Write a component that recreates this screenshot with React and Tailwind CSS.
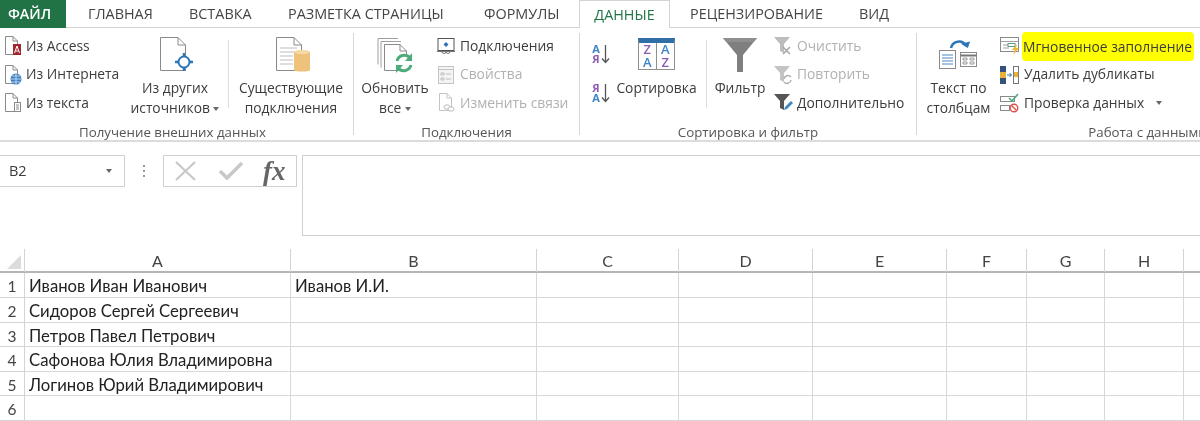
const tabs = [
  { label: "ГЛАВНАЯ", className: "w-[101px]" },
  { label: "ВСТАВКА", className: "w-[99px]" },
  { label: "РАЗМЕТКА СТРАНИЦЫ", className: "w-[196px]" },
  { label: "ФОРМУЛЫ", className: "w-[110px]" },
];

const columns = ["A", "B", "C", "D", "E", "F", "G", "H"];

const rows = [
  ["Иванов Иван Иванович", "Иванов И.И."],
  ["Сидоров Сергей Сергеевич", ""],
  ["Петров Павел Петрович", ""],
  ["Сафонова Юлия Владимировна", ""],
  ["Логинов Юрий Владимирович", ""],
  ["", ""],
];

const gridCols =
  "grid grid-cols-[25px_266px_246px_142px_134px_134px_80px_78px_79px_80px] w-[1264px]";

const Page = ({ x = 0, y = 0, w = 13, h = 18, fold = 5, color = "#8a8a8a" }) => (
  <path
    d={`M${x + 0.5} ${y + 0.5}H${x + w - fold}L${x + w - 0.5} ${y + fold}V${y + h - 0.5}H${x + 0.5}ZM${x + w - fold} ${y + 0.5}V${y + fold}H${x + w - 0.5}`}
    fill="#fff"
    stroke={color}
  />
);

const AccessIcon = () => (
  <svg width="20" height="20" viewBox="-2 0 20 20">
    <Page x={1} y={0} w={13} h={19} />
    <rect x="9" y="8" width="8" height="11" fill="#a4262c" />
    <path d="M10.500 17l2.500-7 2.500 7M11.500 15h3" stroke="#fff" fill="none" />
  </svg>
);

const WebIcon = () => (
  <svg width="20" height="20" viewBox="-2 0 20 20">
    <Page x={1} y={0} w={13} h={19} />
    <circle cx="12" cy="14" r="5.500" fill="#3f7fc4" />
    <path d="M6.500 14h11M12 8.500v11M8 11h8M8 17h8" stroke="#d7e6f5" strokeWidth="0.800" />
  </svg>
);

const TextFileIcon = () => (
  <svg width="20" height="20" viewBox="-2 0 20 20">
    <Page x={1} y={0} w={13} h={19} />
    <rect x="10.500" y="9.500" width="6" height="9" fill="#fff" stroke="#8a8a8a" />
    <path d="M12 12h3M12 14h3M12 16h3" stroke="#8a8a8a" />
  </svg>
);

const OtherSourcesIcon = () => (
  <svg width="36" height="36" viewBox="0 0 36 36" className="ml-[6px]">
    <Page x={0} y={0} w={26} h={34} fold={8} />
    <circle cx="24" cy="25" r="5.500" fill="#fff" stroke="#2e75b6" strokeWidth="2" />
    <path d="M24 16v4M24 30v4M15 25h4M29 25h4" stroke="#2e75b6" strokeWidth="2.500" />
  </svg>
);

const ExistingIcon = () => (
  <svg width="36" height="36" viewBox="0 0 36 36" className="ml-[6px]">
    <Page x={0} y={0} w={26} h={34} fold={8} />
    <path d="M4 11h17M4 15h17M4 19h13M4 23h13M4 27h13" stroke="#bdbdbd" />
    <path d="M18 15c0-2 16-2 16 0v18c0 2-16 2-16 0z" fill="#eec27a" />
    <ellipse cx="26" cy="15" rx="8" ry="2" fill="#f5d9a6" />
  </svg>
);

const RefreshIcon = () => (
  <svg width="38" height="36" viewBox="0 0 38 36" className="ml-[2px]">
    <path d="M1 1.500h20M1 1.500v26M4 4.500h20M4 4.500v26" fill="none" stroke="#a0a0a0" />
    <Page x={7} y={7} w={23} h={27} fold={7} />
    <circle cx="27" cy="26" r="9" fill="#fff" />
    <path
      d="M20 24a7.500 7.500 0 0 1 13-3M34 28a7.500 7.500 0 0 1-13 3"
      fill="none"
      stroke="#4eab7b"
      strokeWidth="3"
    />
    <path d="M35 16v8h-7zM19 36v-8h7z" fill="#4eab7b" />
  </svg>
);

const ConnectionsIcon = () => (
  <svg width="20" height="20" viewBox="0 0 20 20">
    <rect x="2" y="2.500" width="16" height="12" fill="#fff" stroke="#555" />
    <path d="M10 6l2.500 2.500L10 11 7.500 8.500z" fill="#2e75b6" />
    <path d="M1 15.500h18M6 15.500a2 2 0 0 0 4 0M10 15.500a2 2 0 0 0 4 0" fill="none" stroke="#777" />
  </svg>
);

const PropertiesIcon = () => (
  <svg width="20" height="20" viewBox="0 0 20 20">
    <rect x="2.500" y="1.500" width="15" height="17" fill="#f4f4f4" stroke="#c4c4c4" />
    <path d="M2.500 4.500h15" stroke="#c4c4c4" />
    <path d="M5 8h3v2H5zM5 13h3v2H5zM10 9h5M10 14h5" stroke="#bdbdbd" fill="none" />
  </svg>
);

const ChangeLinksIcon = () => (
  <svg width="20" height="20" viewBox="0 0 20 20">
    <Page x={3} y={0} w={13} h={18} color="#c4c4c4" />
    <rect x="8" y="12" width="6" height="4" rx="2" fill="#fff" stroke="#bdbdbd" />
    <rect x="12" y="14" width="6" height="4" rx="2" fill="#fff" stroke="#bdbdbd" />
  </svg>
);

const SortIcon = ({ top, bottom, topClass, bottomClass }) => (
  <div className="flex items-center h-5">
    <div className="flex flex-col items-center w-[8px] text-[11px] font-bold leading-[10px]">
      <span className={topClass}>{top}</span>
      <span className={bottomClass}>{bottom}</span>
    </div>
    <svg width="9" height="20" viewBox="0 0 9 20" className="ml-[1px]">
      <path d="M4.500 1v17M1 14.500l3.500 4 3.500-4" fill="none" stroke="#555" strokeWidth="1.300" />
    </svg>
  </div>
);

const SortBigIcon = () => (
  <div className="grid grid-cols-2 w-[37px] h-[32px] -mt-[2px] border border-[#8f8f8f] border-t-[5px] border-t-[#2f6ea6] text-[13px] font-semibold leading-[13px] text-center">
    <span className="border-r border-[#8f8f8f] text-[#8a5db3]">Z</span>
    <span className="text-[#3d85c6]">A</span>
    <span className="border-r border-[#8f8f8f] text-[#3d85c6]">A</span>
    <span className="text-[#8a5db3]">Z</span>
  </div>
);

const FilterBigIcon = () => (
  <svg width="36" height="36" viewBox="0 0 36 36">
    <path d="M1 1h34L21 18v17h-6V18z" fill="#7f7f7f" />
    <path d="M1 1h34l-3 4H4z" fill="#8f8f8f" />
  </svg>
);

const FilterSmall = ({ color, children }) => (
  <svg width="20" height="20" viewBox="0 0 20 20">
    <path d="M1 1h16l-6 7v9l-4-2V8z" fill={color} />
    {children}
  </svg>
);

const ClearIcon = () => (
  <FilterSmall color="#bdbdbd">
    <path d="M10 11l7 7M17 11l-7 7" stroke="#a8a8a8" strokeWidth="1.600" />
  </FilterSmall>
);

const RepeatIcon = () => (
  <FilterSmall color="#c4c4c4">
    <path d="M11 14a4 4 0 0 1 7-2M18 15a4 4 0 0 1-7 2" fill="none" stroke="#b0b0b0" strokeWidth="1.400" />
  </FilterSmall>
);

const AdvancedIcon = () => (
  <FilterSmall color="#555">
    <path d="M11 17l1-3 6-6 2 2-6 6z" fill="#3d85c6" />
  </FilterSmall>
);

const TextToColumnsIcon = () => (
  <svg width="38" height="32" viewBox="0 0 38 32" className="-mt-[5px] -ml-[2px]">
    <path d="M12 11a8 8 0 0 1 15-2" fill="none" stroke="#2e75b6" strokeWidth="2.500" />
    <path d="M22 8l8 2 0-7z" fill="#2e75b6" transform="rotate(18 26 7)" />
    <rect x="0.500" y="13.500" width="16" height="18" fill="#fff" stroke="#8a8a8a" />
    <path d="M3 18h11M3 21h11M3 24h11M3 27h11" stroke="#4a87c0" />
    <rect x="21.500" y="15.500" width="16" height="14" fill="#fff" stroke="#8a8a8a" />
    <path d="M21.500 18.500h16" stroke="#777" strokeWidth="2" />
    <path d="M24 21h4v2h-4zM31 21h4v2h-4zM24 25h4v2h-4zM31 25h4v2h-4z" fill="none" stroke="#999" />
  </svg>
);

const FlashFillIcon = () => (
  <svg width="20" height="20" viewBox="0 0 20 20">
    <rect x="0.500" y="1.500" width="18" height="14" fill="#fff" stroke="#8a8a8a" />
    <path d="M0.500 5.500h18M3 9h6M3 12h6" stroke="#a0a0a0" />
    <rect x="8" y="7.500" width="7" height="3" fill="#fff" stroke="#5d9c7d" />
    <path d="M17 8l-5 6h3l-2 5 6-7h-3z" fill="#f0b428" />
  </svg>
);

const DuplicatesIcon = () => (
  <svg width="20" height="20" viewBox="0 0 20 20">
    <rect x="0" y="1" width="6" height="6" fill="#35527c" />
    <rect x="0" y="7" width="6" height="6" fill="#e8b13c" />
    <rect x="0" y="13" width="6" height="6" fill="#35527c" />
    <rect x="13.500" y="1.500" width="5" height="17" fill="#fff" stroke="#777" />
    <rect x="14" y="7" width="4" height="5" fill="#e8b13c" />
    <path d="M7 10h4.500M9.500 8l2 2-2 2" fill="none" stroke="#2e75b6" />
  </svg>
);

const ValidationIcon = () => (
  <svg width="20" height="20" viewBox="0 0 20 20">
    <rect x="0.500" y="3.500" width="14" height="5" fill="#fff" stroke="#8a8a8a" />
    <rect x="0.500" y="12.500" width="9" height="5" fill="#fff" stroke="#8a8a8a" />
    <path d="M9 5l3 3 6-7" fill="none" stroke="#4eab7b" strokeWidth="1.600" />
    <circle cx="14" cy="15" r="3.800" fill="#fff" stroke="#d9534f" strokeWidth="1.400" />
    <path d="M11.500 12.500l5 5" stroke="#d9534f" strokeWidth="1.400" />
  </svg>
);

const Caret = ({ className = "" }) => (
  <span
    className={`inline-block w-0 h-0 border-x-[3.5px] border-x-transparent border-t-[4px] border-t-[#666] align-middle ${className}`}
  />
);

const SmallItem = ({ icon, disabled, children }) => (
  <div
    className={`flex items-center h-[28.5px] whitespace-nowrap ${
      disabled ? "text-[#b1b1b1]" : "text-[#3c3c3c]"
    }`}
  >
    <span className="flex w-5 h-5 shrink-0 mr-[4px]">{icon}</span>
    {children}
  </div>
);

const BigButton = ({ icon, children, className = "" }) => (
  <div className={`flex flex-col items-center text-center leading-5 pt-1 ${className}`}>
    <div className="flex items-center justify-center h-[46px]">{icon}</div>
    {children}
  </div>
);

const RibbonGroup = ({ label, width, labelClass = "", children }) => (
  <div className={`flex shrink-0 ${width}`}>
    <div className="flex flex-col flex-1 min-w-0">
      <div className="flex flex-1">{children}</div>
      <div className={`h-[20px] leading-[24px] text-center text-[13.300px] text-[#555] ${labelClass}`}>
        {label}
      </div>
    </div>
    <div className="w-px bg-[#d8d8d8] my-[5px]" />
  </div>
);

const InnerSeparator = ({ className = "" }) => (
  <div className={`w-px h-[68px] mt-3 bg-[#dedede] ${className}`} />
);

const App = () => {
  return (
    <div className="w-[1200px] h-[421px] overflow-hidden bg-white blur-[0.35px] font-['Open_Sans',sans-serif] text-[13.800px] text-[#3c3c3c]">
      {/* tabs */}
      <div className="flex h-[28px] border-b border-[#d4d4d4] text-[14.400px] text-[#444] leading-[27px]">
        <div className="w-[66px] h-[28px] pr-[7px] bg-[#217346] text-white text-center font-semibold">
          ФАЙЛ
        </div>
        <div className="w-[22px]" />
        {tabs.map((tab) => (
          <div key={tab.label} className={`${tab.className} whitespace-nowrap`}>
            {tab.label}
          </div>
        ))}
        <div className="w-[91px] -ml-[15px] h-[28px] bg-white border-x border-t border-[#d4d4d4] text-center text-[#217346]">
          ДАННЫЕ
        </div>
        <div className="w-[20px]" />
        <div className="w-[169px]">РЕЦЕНЗИРОВАНИЕ</div>
        <div>ВИД</div>
      </div>

      {/* ribbon */}
      <div className="flex h-[114px] border-b-2 border-[#dcdcdc]">
        <RibbonGroup label="Получение внешних данных" width="w-[354px]" labelClass="pr-2">
          <div className="pl-[2px] pt-1 w-[125px]">
            <SmallItem icon={<AccessIcon />}>Из Access</SmallItem>
            <SmallItem icon={<WebIcon />}>Из Интернета</SmallItem>
            <SmallItem icon={<TextFileIcon />}>Из текста</SmallItem>
          </div>
          <BigButton icon={<OtherSourcesIcon />} className="w-[100px]">
            <span>Из других</span>
            <span className="whitespace-nowrap">
              источников <Caret />
            </span>
          </BigButton>
          <InnerSeparator className="ml-[3px]" />
          <BigButton icon={<ExistingIcon />} className="flex-1">
            <span>Существующие</span>
            <span>подключения</span>
          </BigButton>
        </RibbonGroup>

        <RibbonGroup label="Подключения" width="w-[226px]">
          <BigButton icon={<RefreshIcon />} className="w-[82px]">
            <span>Обновить</span>
            <span>
              все <Caret />
            </span>
          </BigButton>
          <div className="pt-1">
            <SmallItem icon={<ConnectionsIcon />}>Подключения</SmallItem>
            <SmallItem icon={<PropertiesIcon />} disabled>
              Свойства
            </SmallItem>
            <SmallItem icon={<ChangeLinksIcon />} disabled>
              Изменить связи
            </SmallItem>
          </div>
        </RibbonGroup>

        <RibbonGroup label="Сортировка и фильтр" width="w-[337px]">
          <div className="flex flex-col gap-[19px] pl-[12px] pt-[16px] w-[36px]">
            <SortIcon top="А" bottom="Я" topClass="text-[#3d85c6]" bottomClass="text-[#8a5db3]" />
            <SortIcon top="Я" bottom="А" topClass="text-[#8a5db3]" bottomClass="text-[#3d85c6]" />
          </div>
          <BigButton icon={<SortBigIcon />} className="w-[81px]">
            <span>Сортировка</span>
          </BigButton>
          <InnerSeparator className="ml-[9px]" />
          <BigButton icon={<FilterBigIcon />} className="w-[66px]">
            <span>Фильтр</span>
          </BigButton>
          <div className="pt-1">
            <SmallItem icon={<ClearIcon />} disabled>
              Очистить
            </SmallItem>
            <SmallItem icon={<RepeatIcon />} disabled>
              Повторить
            </SmallItem>
            <SmallItem icon={<AdvancedIcon />}>Дополнительно</SmallItem>
          </div>
        </RibbonGroup>

        <RibbonGroup label="Работа с данными" width="w-[462px]">
          <BigButton icon={<TextToColumnsIcon />} className="w-[83px]">
            <span>Текст по</span>
            <span>столбцам</span>
          </BigButton>
          <div className="pt-1">
            <SmallItem icon={<FlashFillIcon />}>
              <span className="bg-[#ffff00] rounded-[4px] pr-[2px] pl-px pt-[5px] pb-[3px] -ml-[2px]">
                Мгновенное заполнение
              </span>
            </SmallItem>
            <SmallItem icon={<DuplicatesIcon />}>Удалить дубликаты</SmallItem>
            <SmallItem icon={<ValidationIcon />}>
              Проверка данных
              <Caret className="ml-[12px]" />
            </SmallItem>
          </div>
        </RibbonGroup>
      </div>

      {/* formula bar */}
      <div className="flex mt-[13px] h-[81px]">
        <div className="flex items-center justify-between w-[125px] h-[32px] pl-[9px] pr-3 border border-l-0 border-[#d0d0d0] text-[14.500px]">
          B2
          <Caret />
        </div>
        <div className="flex flex-col items-center gap-[3px] w-[38px] pt-[10px]">
          <span className="w-[2px] h-[2px] bg-[#999]" />
          <span className="w-[2px] h-[2px] bg-[#999]" />
          <span className="w-[2px] h-[2px] bg-[#999]" />
        </div>
        <div className="flex items-center w-[134px] h-[32px] border border-[#d0d0d0]">
          <svg width="22" height="20" viewBox="0 0 22 20" className="ml-[11px]">
            <path d="M1 1l19 18M20 1L1 19" stroke="#c8c8c8" strokeWidth="2.200" />
          </svg>
          <svg width="24" height="18" viewBox="0 0 24 18" className="ml-[22px]">
            <path d="M1 9l7 7L23 1" fill="none" stroke="#c8c8c8" strokeWidth="3.500" />
          </svg>
          <span className="ml-[20px] font-['Liberation_Serif',serif] italic font-bold text-[27px] leading-none text-[#666]">
            fx
          </span>
        </div>
        <div className="flex-1 ml-[5px] border-l border-b border-t border-[#d0d0d0]" />
      </div>

      {/* sheet */}
      <div className={`${gridCols} mt-[13px] h-[24.400px] font-['Lato','Open_Sans',sans-serif] text-[#444] text-[16px] border-b-2 border-[#b5b5b5]`}>
        <div className="relative border-r border-[#d4d4d4]">
          <svg width="14" height="14" viewBox="0 0 14 14" className="absolute left-[7px] bottom-[3px]">
            <path d="M14 0V14H0z" fill="#dcdcdc" />
          </svg>
        </div>
        {columns.map((col) => (
          <div key={col} className="text-center leading-[23px] border-r border-[#d4d4d4]">
            {col}
          </div>
        ))}
        <div className="border-r border-[#d4d4d4]" />
      </div>
      {rows.map((row, index) => (
        <div
          key={index}
          className={`${gridCols} grid-rows-[24.600px] h-[24.600px] font-['Lato','Open_Sans',sans-serif] text-[16.700px] text-[#222]`}
        >
          <div className="text-center leading-[26px] text-[#444] text-[15.500px] border-r border-b border-[#d4d4d4]">
            {index + 1}
          </div>
          <div className="pl-[4px] leading-[26px] whitespace-nowrap border-r border-b border-[#d8d8d8]">
            {row[0]}
          </div>
          <div className="pl-[4px] leading-[26px] whitespace-nowrap border-r border-b border-[#d8d8d8]">
            {row[1]}
          </div>
          {columns.slice(2).map((col) => (
            <div key={col} className="border-r border-b border-[#d8d8d8]" />
          ))}
          <div className="border-r border-b border-[#d8d8d8]" />
        </div>
      ))}
    </div>
  );
};

export default App;
